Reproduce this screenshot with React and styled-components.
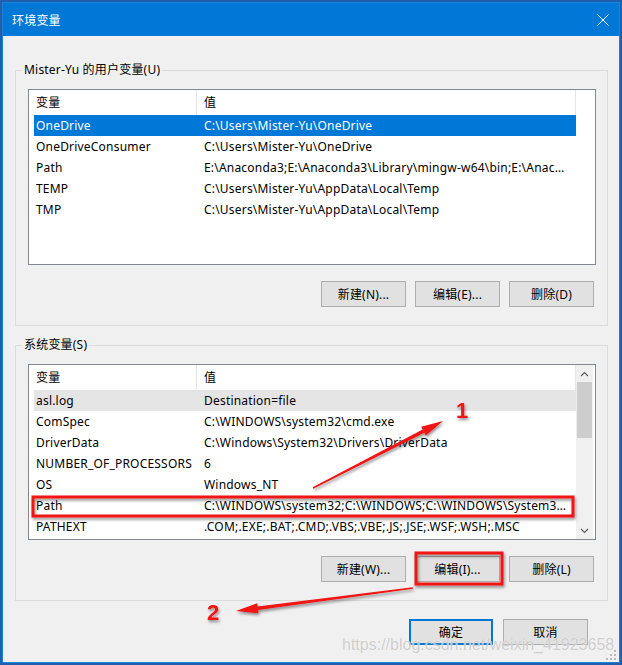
import React from 'react'
import styled, { createGlobalStyle } from 'styled-components'

const GlobalStyle = createGlobalStyle`
  html, body {
    margin: 0;
    padding: 0;
  }
  body {
    background: #1f5fae;
    font-family: "Noto Sans", "Noto Sans CJK SC", sans-serif;
    font-size: 12px;
    letter-spacing: 0.2px;
    color: #000;
  }
`

const Screen = styled.div`
  position: relative;
  box-sizing: border-box;
  width: 622px;
  height: 665px;
  padding: 2px;
  overflow: hidden;
`
const Window = styled.div`
  position: relative;
  box-sizing: border-box;
  width: 618px;
  height: 661px;
  border: 1px solid #1883d7;
  background: #f0f0f0;
  display: flex;
  flex-direction: column;
`
const TitleBar = styled.div`
  height: 33px;
  flex: none;
  display: flex;
  align-items: center;
  justify-content: space-between;
  padding: 0 10px 0 9px;
  background: #0078d7;
  color: #fff;
  font-size: 12px;
`
const Body = styled.div`
  display: flex;
  flex-direction: column;
  padding: 0 11px 0 12px;
`
const Group = styled.fieldset`
  margin: ${p => p.$top}px 0 0;
  padding: 0 11px 18px 12px;
  border: 1px solid #dcdcdc;
  min-width: 0;
`
const Legend = styled.legend`
  margin-left: -6px;
  padding: 0 2px;
  line-height: 16px;
  font-size: 12px;
`
const ListBox = styled.div`
  margin-top: 11px;
  height: 176px;
  box-sizing: border-box;
  border: 1px solid #828790;
  background: #fff;
  display: flex;
  overflow: hidden;
`
const ListContent = styled.div`
  flex: 1;
  min-width: 0;
`
const HeaderRow = styled.div`
  display: grid;
  grid-template-columns: 168px 1fr;
  height: 25px;
`
const HeaderCell = styled.div`
  box-sizing: border-box;
  padding-left: 7px;
  line-height: 25px;
  border-right: 1px solid #e5e5e5;
`
const Row = styled.div`
  display: grid;
  grid-template-columns: 163px 1fr;
  margin-left: 5px;
  height: 21px;
  line-height: 21px;
  background: ${p =>
    p.$state === 'selected' ? '#0078d7' : p.$state === 'hover' ? '#e5e5e5' : 'transparent'};
  color: ${p => (p.$state === 'selected' ? '#fff' : '#000')};
`
const Cell = styled.div`
  padding-left: ${p => p.$pad}px;
  padding-right: ${p => (p.$pad > 2 ? 6 : 0)}px;
  white-space: nowrap;
  overflow: hidden;
  text-overflow: ${p => (p.$pad > 2 ? 'ellipsis' : 'clip')};
`
const ScrollArea = styled.div`
  width: 17px;
  margin-right: 2px;
  flex: none;
  display: flex;
  flex-direction: column;
  background: ${p => (p.$visible ? '#f0f0f0' : 'transparent')};
`
const ScrollBtn = styled.div`
  height: 17px;
  display: flex;
  align-items: center;
  justify-content: center;
`
const Track = styled.div`
  flex: 1;
`
const Thumb = styled.div`
  height: 56px;
  margin: 0 1px;
  background: #cdcdcd;
`
const ButtonRow = styled.div`
  display: flex;
  justify-content: flex-end;
  gap: ${p => p.$gap || 9}px;
  margin-top: ${p => p.$top || 16}px;
  padding-right: ${p => p.$right || 2}px;
`
const Button = styled.button`
  width: ${p => p.$w || 85}px;
  height: 26px;
  box-sizing: border-box;
  padding: 0;
  border: ${p => (p.$default ? '2px solid #0078d7' : '1px solid #adadad')};
  background: #e1e1e1;
  font-family: inherit;
  font-size: 12px;
  letter-spacing: inherit;
  color: #000;
`
const Grip = styled.svg`
  position: absolute;
  right: 2px;
  bottom: 1px;
`
const Overlay = styled.svg`
  position: absolute;
  left: 0;
  top: 0;
  pointer-events: none;
`
const Watermark = styled.div`
  position: absolute;
  left: 342px;
  top: 636px;
  font-family: "Liberation Sans", Arial, sans-serif;
  font-size: 16px;
  letter-spacing: 0;
  color: rgba(190, 190, 190, 0.75);
  text-shadow: 0 0 1px rgba(255, 255, 255, 0.9);
  white-space: nowrap;
  pointer-events: none;
`

const userVars = [
  ['OneDrive', 'C:\\Users\\Mister-Yu\\OneDrive', 'selected'],
  ['OneDriveConsumer', 'C:\\Users\\Mister-Yu\\OneDrive'],
  ['Path', 'E:\\Anaconda3;E:\\Anaconda3\\Library\\mingw-w64\\bin;E:\\Anaconda3\\Library\\usr\\bin;E:\\Anaconda3\\Scripts'],
  ['TEMP', 'C:\\Users\\Mister-Yu\\AppData\\Local\\Temp'],
  ['TMP', 'C:\\Users\\Mister-Yu\\AppData\\Local\\Temp'],
]

const systemVars = [
  ['asl.log', 'Destination=file', 'hover'],
  ['ComSpec', 'C:\\WINDOWS\\system32\\cmd.exe'],
  ['DriverData', 'C:\\Windows\\System32\\Drivers\\DriverData'],
  ['NUMBER_OF_PROCESSORS', '6'],
  ['OS', 'Windows_NT'],
  ['Path', 'C:\\WINDOWS\\system32;C:\\WINDOWS;C:\\WINDOWS\\System32\\Wbem;C:\\WINDOWS\\System32\\WindowsPowerShell\\v1.0\\'],
  ['PATHEXT', '.COM;.EXE;.BAT;.CMD;.VBS;.VBE;.JS;.JSE;.WSF;.WSH;.MSC'],
]

const Chevron = ({ up }) => (
  <svg width="9" height="6" viewBox="0 0 9 6">
    <path
      d={up ? 'M1 5 L4.5 1.5 L8 5' : 'M1 1 L4.5 4.5 L8 1'}
      fill="none"
      stroke="#606060"
      strokeWidth="1.2"
    />
  </svg>
)

const VarList = ({ rows, scroll }) => (
  <ListBox>
    <ListContent>
      <HeaderRow>
        <HeaderCell>变量</HeaderCell>
        <HeaderCell>值</HeaderCell>
      </HeaderRow>
      {rows.map(([name, value, state]) => (
        <Row key={name} $state={state}>
          <Cell $pad={2}>{name}</Cell>
          <Cell $pad={7}>{value}</Cell>
        </Row>
      ))}
    </ListContent>
    <ScrollArea $visible={scroll}>
      {scroll && (
        <>
          <ScrollBtn>
            <Chevron up />
          </ScrollBtn>
          <Track>
            <Thumb />
          </Track>
          <ScrollBtn>
            <Chevron />
          </ScrollBtn>
        </>
      )}
    </ScrollArea>
  </ListBox>
)

const red = '#f01212'

const Annotations = () => (
  <Overlay width="622" height="665" viewBox="0 0 622 665">
    <defs>
      <filter id="shade" x="-20%" y="-40%" width="140%" height="180%">
        <feDropShadow dx="1" dy="2" stdDeviation="1.6" floodColor="#000" floodOpacity="0.45" />
      </filter>
    </defs>
    <g filter="url(#shade)" fill="none" stroke={red} strokeWidth="3">
      <rect x="33" y="497" width="540" height="19" />
      <rect x="416" y="553" width="86" height="31" />
    </g>
    <g filter="url(#shade)" fill={red}>
      <polygon points="313.3,488.7 424.3,432.7 422.7,429.5 312.7,487.3" />
      <polygon points="443,421 425.8,435.5 421.2,426.7" />
      <polygon points="413.1,588.7 258,609.9 257.6,606.5 412.9,587.3" />
      <polygon points="236,611 258.4,613.2 257.2,603.2" />
      <text x="456" y="418" fontFamily="Liberation Sans, Arial, sans-serif" fontWeight="700" fontSize="22">
        1
      </text>
      <text x="207" y="620" fontFamily="Liberation Sans, Arial, sans-serif" fontWeight="700" fontSize="22">
        2
      </text>
    </g>
  </Overlay>
)

const App = () => (
  <Screen>
    <GlobalStyle />
    <Window>
      <TitleBar>
        <span>环境变量</span>
        <svg width="12" height="12" viewBox="0 0 12 12">
          <path d="M0.5 0.5 L11.5 11.5 M11.5 0.5 L0.5 11.5" stroke="#fff" strokeWidth="1" />
        </svg>
      </TitleBar>
      <Body>
        <Group $top={26}>
          <Legend>Mister-Yu 的用户变量(U)</Legend>
          <VarList rows={userVars} />
          <ButtonRow>
            <Button>新建(N)...</Button>
            <Button>编辑(E)...</Button>
            <Button>删除(D)</Button>
          </ButtonRow>
        </Group>
        <Group $top={11}>
          <Legend>系统变量(S)</Legend>
          <VarList rows={systemVars} scroll />
          <ButtonRow>
            <Button>新建(W)...</Button>
            <Button>编辑(I)...</Button>
            <Button>删除(L)</Button>
          </ButtonRow>
        </Group>
        <ButtonRow $top={18} $gap={10} $right={20}>
          <Button $w={84} $default>
            确定
          </Button>
          <Button>取消</Button>
        </ButtonRow>
      </Body>
      <Grip width="12" height="12" viewBox="0 0 12 12">
        <g fill="#b9b9b9">
          <rect x="9" y="1" width="2" height="2" />
          <rect x="5" y="5" width="2" height="2" />
          <rect x="9" y="5" width="2" height="2" />
          <rect x="1" y="9" width="2" height="2" />
          <rect x="5" y="9" width="2" height="2" />
          <rect x="9" y="9" width="2" height="2" />
        </g>
      </Grip>
    </Window>
    <Watermark>https://blog.csdn.net/weixin_41923658</Watermark>
    <Annotations />
  </Screen>
)

export default App
